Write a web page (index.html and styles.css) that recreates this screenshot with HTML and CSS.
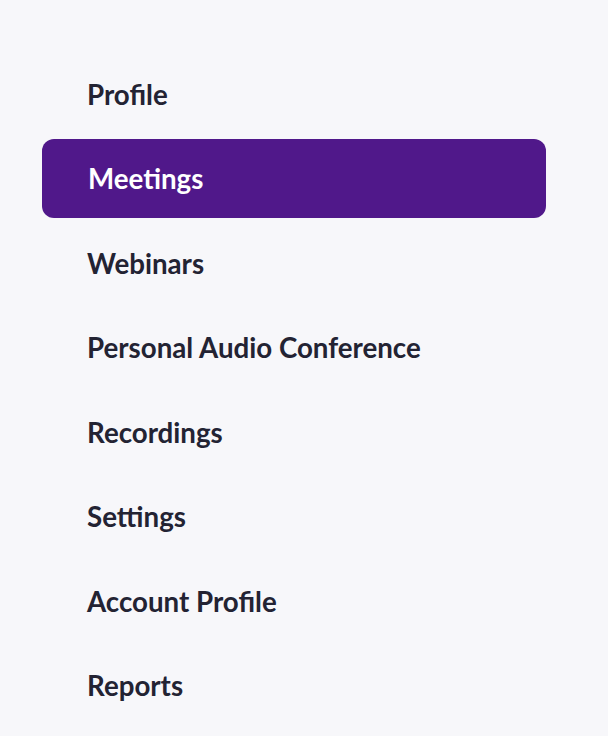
FILE: index.html
```html
<!DOCTYPE html>
<html lang="en">
<head>
    <meta charset="UTF-8">
    <meta name="viewport" content="width=device-width, initial-scale=1.0">
    <title>Menu</title>
    <link rel="stylesheet" href="styles.css">
</head>
<body>
    <nav class="side-menu">
        <a href="#" class="menu-item">Profile</a>
        <a href="#" class="menu-item active">Meetings</a>
        <a href="#" class="menu-item">Webinars</a>
        <a href="#" class="menu-item">Personal Audio Conference</a>
        <a href="#" class="menu-item">Recordings</a>
        <a href="#" class="menu-item">Settings</a>
        <a href="#" class="menu-item">Account Profile</a>
        <a href="#" class="menu-item">Reports</a>
    </nav>
</body>
</html>
```
FILE: styles.css
```css
body {
    margin: 0;
    font-family: Lato, "Liberation Sans", sans-serif;
    background-color: #f7f7fa;
    color: #232333;
}

.side-menu {
    display: flex;
    flex-direction: column;
    gap: 5.5px;
    width: 504px;
    padding: 54.5px 0 0 42px;
}

.menu-item {
    display: flex;
    align-items: center;
    height: 79px;
    padding-left: 45px;
    border-radius: 12px;
    font-size: 27.7px;
    font-weight: 700;
    color: #232333;
    text-decoration: none;
}

.menu-item.active {
    background-color: #50188a;
    color: #ffffff;
    padding-left: 46px;
}
```
